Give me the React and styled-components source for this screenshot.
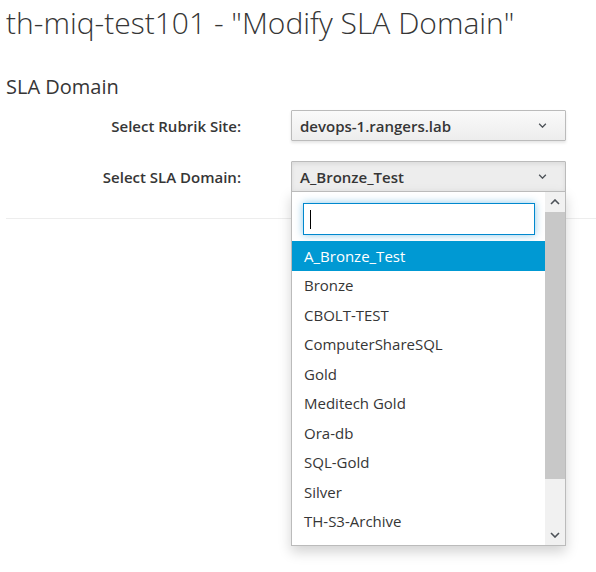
import React from "react";
import styled, { createGlobalStyle } from "styled-components";

const Global = createGlobalStyle`
  html, body { margin: 0; padding: 0; background: #fff; }
  body {
    font-family: "Open Sans", "Noto Sans", "Liberation Sans", sans-serif;
    color: #363636;
    font-size: 14px;
  }
  * { box-sizing: border-box; }
`;

const Page = styled.div`
  padding: 0 0 0 6px;
  width: 596px;
  height: 572px;
`;

const Title = styled.h1`
  margin: 6px 0 0 0;
  font-size: 30px;
  font-weight: 300;
  line-height: 33px;
  color: #363636;
  white-space: nowrap;
`;

const SectionTitle = styled.h3`
  margin: 37px 0 0 0;
  font-size: 20px;
  font-weight: 400;
  line-height: 21px;
  color: #363636;
`;

const Form = styled.div`
  margin-top: 13px;
  display: grid;
  grid-template-columns: 235px 275px;
  column-gap: 50px;
  row-gap: 20px;
  align-items: center;
`;

const Label = styled.label`
  text-align: right;
  font-weight: 600;
  font-size: 15px;
  color: #363636;
`;

const SelectWrap = styled.div`
  position: relative;
`;

const SelectButton = styled.div`
  height: 31px;
  display: flex;
  align-items: center;
  justify-content: space-between;
  padding: 0 18px 0 8px;
  border: 1px solid #bbb;
  border-radius: 1px;
  font-weight: 600;
  font-size: 15px;
  color: #363636;
  background: ${(p) =>
    p.$open ? "#ededed" : "linear-gradient(to bottom, #fafafa 0, #ededed 100%)"};
  box-shadow: ${(p) =>
    p.$open ? "inset 0 2px 4px rgba(3,3,3,0.08)" : "0 2px 3px rgba(3,3,3,0.1)"};
`;

const Chevron = ({ up, size = 9 }) => (
  <svg width={size} height={Math.round(size * 0.6)} viewBox="0 0 10 6">
    <polyline
      points={up ? "1,5 5,1 9,5" : "1,1 5,5 9,1"}
      fill="none"
      stroke="#4d5258"
      strokeWidth="1.6"
    />
  </svg>
);

const Divider = styled.hr`
  margin: 26px 0 0 0;
  border: 0;
  border-top: 1px solid #ededed;
`;

const Menu = styled.div`
  position: absolute;
  left: 0;
  right: 0;
  top: 100%;
  margin-top: -1px;
  height: 355px;
  display: flex;
  border: 1px solid #bbb;
  background: #fff;
  box-shadow: 0 6px 12px rgba(0, 0, 0, 0.175);
  z-index: 10;
`;

const MenuBody = styled.div`
  flex: 1;
  min-width: 0;
  overflow: hidden;
`;

const SearchArea = styled.div`
  padding: 11px 10px 6px 11px;
`;

const SearchBox = styled.div`
  height: 32px;
  border: 1px solid #0088ce;
  box-shadow: 0 0 8px rgba(0, 136, 206, 0.45);
  background: #fff;
  display: flex;
  align-items: center;
  padding-left: 6px;
`;

const Caret = styled.span`
  width: 1px;
  height: 19px;
  background: #000;
`;

const List = styled.ul`
  list-style: none;
  margin: 0;
  padding: 0;
`;

const Item = styled.li`
  height: 29.5px;
  display: flex;
  align-items: center;
  padding-left: 12px;
  font-size: 15px;
  color: ${(p) => (p.$active ? "#fff" : "#363636")};
  background: ${(p) => (p.$active ? "#0099d3" : "transparent")};
`;

const Scrollbar = styled.div`
  width: 20px;
  background: #f1f1f1;
  display: flex;
  flex-direction: column;
`;

const ScrollButton = styled.div`
  height: 20px;
  display: flex;
  align-items: center;
  justify-content: center;
`;

const Thumb = styled.div`
  height: 267px;
  background: #c8c8c8;
`;

const Track = styled.div`
  flex: 1;
`;

const items = [
  "A_Bronze_Test",
  "Bronze",
  "CBOLT-TEST",
  "ComputerShareSQL",
  "Gold",
  "Meditech Gold",
  "Ora-db",
  "SQL-Gold",
  "Silver",
  "TH-S3-Archive",
];

export default function App() {
  return (
    <>
      <Global />
      <Page>
        <Title>th-miq-test101 - "Modify SLA Domain"</Title>
        <SectionTitle>SLA Domain</SectionTitle>
        <Form>
          <Label>Select Rubrik Site:</Label>
          <SelectWrap>
            <SelectButton>
              <span>devops-1.rangers.lab</span>
              <Chevron />
            </SelectButton>
          </SelectWrap>
          <Label>Select SLA Domain:</Label>
          <SelectWrap>
            <SelectButton $open>
              <span>A_Bronze_Test</span>
              <Chevron />
            </SelectButton>
            <Menu>
              <MenuBody>
                <SearchArea>
                  <SearchBox>
                    <Caret />
                  </SearchBox>
                </SearchArea>
                <List>
                  {items.map((it, i) => (
                    <Item key={it} $active={i === 0}>
                      {it}
                    </Item>
                  ))}
                </List>
              </MenuBody>
              <Scrollbar>
                <ScrollButton>
                  <Chevron up size={10} />
                </ScrollButton>
                <Thumb />
                <Track />
                <ScrollButton>
                  <Chevron size={10} />
                </ScrollButton>
              </Scrollbar>
            </Menu>
          </SelectWrap>
        </Form>
        <Divider />
      </Page>
    </>
  );
}
